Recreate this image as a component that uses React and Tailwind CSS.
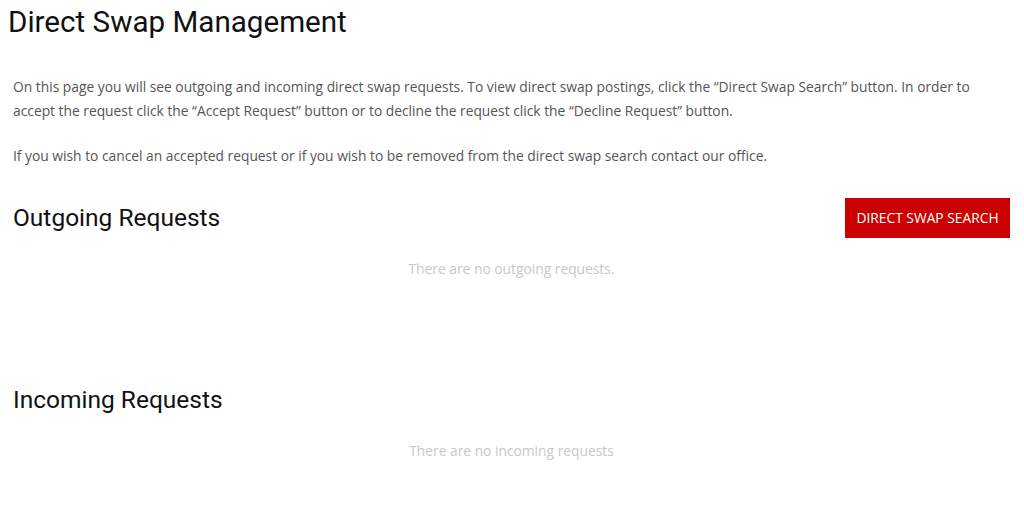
import React from 'react';

const EmptyNote = ({ children }) => (
  <p className="mt-[19px] text-center text-[13.8px] leading-6 text-[#c8c8c8]">{children}</p>
);

const App = () => {
  return (
    <div className="min-h-[515px] bg-white font-['Open_Sans',sans-serif]">
      {/* Title */}
      <h1 className="pl-2 pt-[2px] font-['Roboto',sans-serif] text-[29.6px] leading-10 text-[#111]">
        Direct Swap Management
      </h1>

      <div className="pl-[13px] pr-[14px]">
        {/* Intro */}
        <p className="mt-[33px] text-[13.8px] leading-6 text-[#555]">
          On this page you will see outgoing and incoming direct swap requests. To view direct swap postings, click the “Direct Swap Search” button. In order to accept the request click the “Accept Request” button or to decline the request click the “Decline Request” button.
        </p>
        <p className="mt-[21px] text-[13.8px] leading-6 text-[#555]">
          If you wish to cancel an accepted request or if you wish to be removed from the direct swap search contact our office.
        </p>

        {/* Outgoing */}
        <div className="mt-[30px] flex items-center justify-between">
          <h2 className="font-['Roboto',sans-serif] text-[24.5px] leading-10 text-[#111]">Outgoing Requests</h2>
          <button className="flex h-10 w-[165px] items-center justify-center bg-[#cc0000] text-[13.8px] uppercase text-white">
            Direct Swap Search
          </button>
        </div>
        <EmptyNote>There are no outgoing requests.</EmptyNote>

        {/* Incoming */}
        <h2 className="mt-[99px] font-['Roboto',sans-serif] text-[24.5px] leading-10 text-[#111]">Incoming Requests</h2>
        <EmptyNote>There are no incoming requests</EmptyNote>
      </div>
    </div>
  );
};

export default App;
